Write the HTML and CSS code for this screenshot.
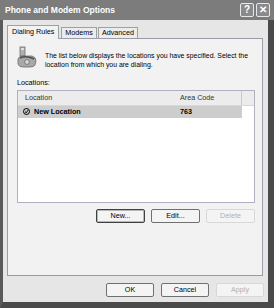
FILE: index.html
```html
<!DOCTYPE html>
<html>
<head>
<meta charset="utf-8">
<title>Phone and Modem Options</title>
<link rel="stylesheet" href="styles.css">
</head>
<body>
<div class="window">
  <div class="titlebar">
    <span class="title">Phone and Modem Options</span>
    <span class="capbtn">?</span>
    <span class="capbtn">&#x2715;</span>
  </div>
  <div class="frame">
    <div class="tabs">
      <span class="tab selected">Dialing Rules</span>
      <span class="tab">Modems</span>
      <span class="tab">Advanced</span>
    </div>
    <div class="panel">
      <div class="intro">
        <svg class="phone" width="20" height="22" viewBox="0 0 20 22">
          <rect x="3" y="1" width="5" height="9" fill="#b0b0b0" stroke="#707070" stroke-width="0.8"/>
          <rect x="4" y="2" width="3" height="2" fill="#e0e0e0"/>
          <path d="M1 13 Q2 10 6 10 L15 10 Q19 11 19 15 L18 19 Q17 21 13 21 L6 21 Q2 21 1 18 Z" fill="#a8a8a8" stroke="#6a6a6a" stroke-width="0.8"/>
          <path d="M3 12 Q9 9 17 13" fill="none" stroke="#505050" stroke-width="1.6"/>
          <circle cx="10" cy="16" r="2.4" fill="#d8d8d8" stroke="#606060" stroke-width="0.7"/>
        </svg>
        <p>The list below displays the locations you have specified. Select the location from which you are dialing.</p>
      </div>
      <div class="label">Locations:</div>
      <div class="list">
        <div class="head">
          <span class="col-loc">Location</span>
          <span class="col-code">Area Code</span>
        </div>
        <div class="row">
          <span class="col-loc">
            <svg class="mark" width="7" height="7" viewBox="0 0 7 7">
              <circle cx="3.5" cy="3.5" r="3" fill="none" stroke="#000" stroke-width="1"/>
              <path d="M2 3.6 L3.3 4.8 L5 2.2" fill="none" stroke="#000" stroke-width="1"/>
            </svg>
            New Location
          </span>
          <span class="col-code">763</span>
        </div>
      </div>
      <div class="actions">
        <span class="btn default">New...</span>
        <span class="btn">Edit...</span>
        <span class="btn disabled">Delete</span>
      </div>
    </div>
    <div class="footer">
      <span class="btn">OK</span>
      <span class="btn">Cancel</span>
      <span class="btn disabled">Apply</span>
    </div>
  </div>
</div>
</body>
</html>
```

FILE: styles.css
```css
*
{
box-sizing: border-box;
}

body
{
margin: 0;
font-family: "Liberation Sans", Arial, sans-serif;
font-size: 7.2px;
color: #000;
}

.window
{
width: 274px;
height: 308px;
display: flex;
flex-direction: column;
background: #555;
}

.titlebar
{
height: 20px;
flex: none;
display: flex;
align-items: center;
padding: 0 4px 0 5px;
background: #7c7c7c;
color: #fff;
}

.title
{
flex: 1;
font-weight: bold;
font-size: 8.5px;
}

.capbtn
{
width: 14px;
height: 14px;
margin-left: 2px;
border: 1px solid #e8e8e8;
border-radius: 2px;
background: #8a8a8a;
color: #fff;
font-weight: bold;
font-size: 10px;
line-height: 12px;
text-align: center;
}

.frame
{
flex: 1;
display: flex;
flex-direction: column;
border-left: 3px solid #5a5a5a;
border-right: 6px solid #4a4a4a;
border-bottom: 6px solid #4a4a4a;
background: #e6e6e6;
padding: 5px 5px 0 4px;
}

.tabs
{
display: flex;
align-items: flex-end;
height: 13px;
flex: none;
}

.tab
{
height: 11px;
line-height: 10px;
padding: 0 3px;
margin-right: 1px;
border: 1px solid #a0a0a0;
border-bottom: none;
background: #ececec;
}

.tab.selected
{
height: 14px;
line-height: 12px;
padding: 0 4px;
margin-right: 2px;
background: #f2f2f2;
position: relative;
top: 1px;
}

.panel
{
height: 238px;
flex: none;
border: 1px solid #9c9ca8;
background: #f2f2f2;
padding: 7px 6px 0 9px;
}

.intro
{
display: flex;
}

.phone
{
flex: none;
margin-right: 8px;
}

.intro p
{
margin: 5px 0 0;
line-height: 9px;
font-size: 6.9px;
}

.label
{
margin-top: 9px;
line-height: 9px;
}

.list
{
margin-top: 3px;
margin-right: 1px;
height: 113px;
border: 1px solid #b0b0c0;
background: #fff;
}

.head
{
display: flex;
height: 15px;
line-height: 14px;
background: #ececec;
border-bottom: 1px solid #d8d8d8;
color: #333;
}

.head .col-loc
{
width: 162px;
padding-left: 7px;
}

.head .col-code
{
width: 62px;
border-right: 1px solid #c8c8c8;
}

.row
{
display: flex;
width: 224px;
height: 12px;
line-height: 12px;
background: #cdcdcd;
font-weight: bold;
}

.row .col-loc
{
width: 162px;
padding-left: 5px;
}

.mark
{
vertical-align: -1px;
margin-right: 2px;
}

.actions
{
display: flex;
justify-content: flex-end;
gap: 6px;
margin-top: 6px;
margin-right: 1px;
}

.btn
{
width: 49px;
height: 14px;
line-height: 12px;
border: 1px solid #707070;
border-radius: 2px;
background: #f4f4f4;
text-align: center;
}

.btn.default
{
border: 1px solid #404040;
box-shadow: inset 0 0 0 1px #b8b8b8;
}

.btn.disabled
{
border-color: #d8d8d8;
color: #b0b0b0;
}

.footer
{
display: flex;
justify-content: flex-end;
gap: 7px;
padding-top: 7px;
margin-right: -1px;
}

.footer .btn
{
width: 48px;
}
```
